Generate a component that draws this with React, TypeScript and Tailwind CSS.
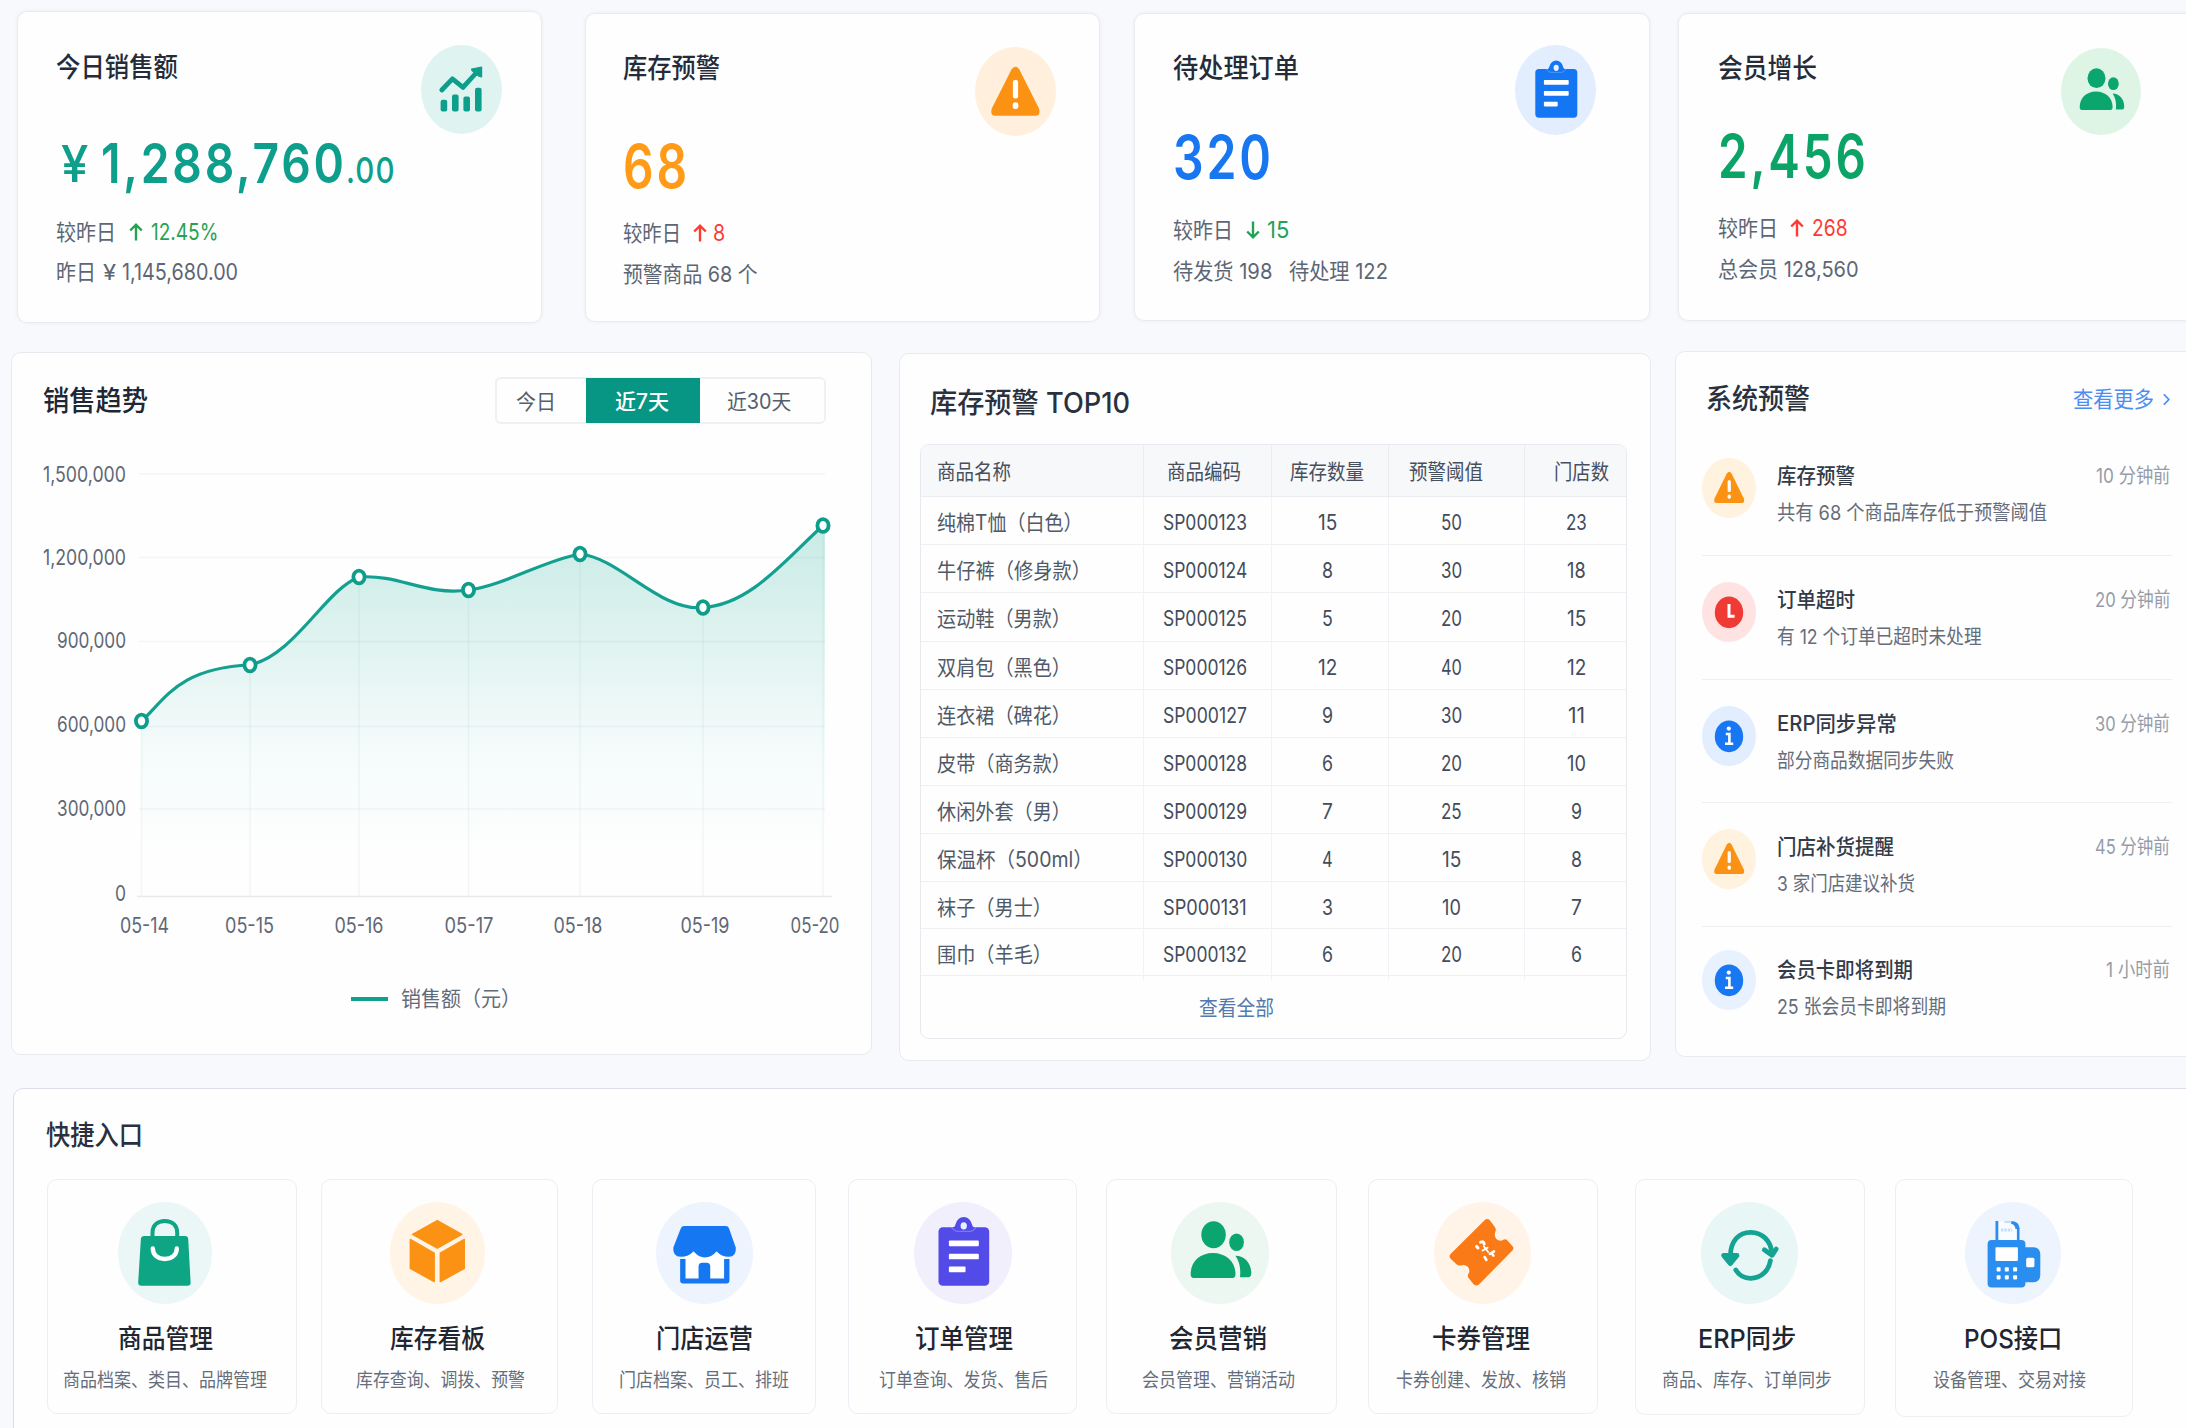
import { useLayoutEffect, useRef, useState, type ReactNode } from "react";

/* Single line of text condensed or widened to an exact width. */
function Fit({ w, className = "", children }: { w: number; className?: string; children: ReactNode }) {
  const ref = useRef<HTMLSpanElement>(null);
  const [scale, setScale] = useState(1);
  useLayoutEffect(() => {
    if (ref.current) setScale(w / ref.current.offsetWidth);
  }, [w]);
  return (
    <span className={`block shrink-0 whitespace-nowrap ${className}`} style={{ width: w }}>
      <span ref={ref} className="inline-block origin-left" style={{ transform: `scaleX(${scale})` }}>
        {children}
      </span>
    </span>
  );
}

/* ---------- icon drawings ---------- */

function TrendArt() {
  return (
    <g fill="#0d9f8c">
      <path d="M20.8 45 31.4 33.8 42 42.4 56 27" fill="none" stroke="#0d9f8c" strokeWidth="4.8" strokeLinecap="round" strokeLinejoin="round" />
      <path d="M50.6 24 60.6 22.2V32L57.5 31 51 25.5Z" stroke="#0d9f8c" strokeWidth="1.2" strokeLinejoin="round" />
      <rect x="19.6" y="54.8" width="6.6" height="11.6" rx="2" />
      <rect x="31" y="49.6" width="6.6" height="16.8" rx="2" />
      <rect x="42.4" y="51.5" width="6.6" height="14.9" rx="2" />
      <rect x="54" y="42.8" width="6.6" height="23.6" rx="2" />
    </g>
  );
}

function WarnArt() {
  return (
    <>
      <path d="M36.6 22.3Q40.4 17 44.2 22.3L64 61.5Q66 68.6 60.5 68.8H20.3Q14.8 68.6 16.8 61.5Z" fill="#fb9213" />
      <rect x="37.9" y="33" width="5.2" height="18.5" rx="2.2" fill="#fff" />
      <ellipse cx="40.5" cy="58.7" rx="2.9" ry="3.4" fill="#fff" />
    </>
  );
}

function ClipArt({ color }: { color: string }) {
  return (
    <>
      <rect x="20.3" y="24" width="42" height="48.7" rx="3.6" fill={color} />
      <path d="M30.5 24.5Q34 24.5 34.4 21.5Q36 15.6 41.2 15.4Q46.4 15.6 48 21.5Q48.4 24.5 52 24.5V27H30.5Z" fill={color} />
      <path d="M31 23.9Q33.5 27.4 36 27.4H46.5Q49 27.4 51.4 23.9" fill="none" stroke="#fff" strokeOpacity="0.25" strokeWidth="0.9" />
      <ellipse cx="41.2" cy="22.8" rx="2.6" ry="3.1" fill="#e8f1ff" />
      <rect x="28.9" y="35" width="24.8" height="4.7" rx="0.8" fill="#fff" />
      <rect x="28.9" y="46" width="24.8" height="4.7" rx="0.8" fill="#fff" />
      <rect x="28.9" y="56.7" width="13.8" height="4.7" rx="0.8" fill="#fff" />
    </>
  );
}

function PeopleArt() {
  return (
    <g fill="#0ba570">
      <ellipse cx="35.5" cy="30.2" rx="9" ry="9.9" />
      <path d="M18.7 59C18.7 50 25.5 43.6 35 43.6S51.6 50 51.6 59Q51.6 62 49.4 62H20.9Q18.7 62 18.7 59Z" />
      <ellipse cx="52.4" cy="35.7" rx="5.4" ry="6.4" />
      <path d="M51.6 45.6C58.5 45.6 63.2 51.5 63.2 58.2Q63.2 61.4 61.4 61.4H54.9C55.6 55 54.6 50 51.6 45.6Z" />
    </g>
  );
}

function BagArt() {
  return (
    <>
      <path d="M34.5 37V31C34.5 23 39.6 19 46.8 19S59.2 23 59.2 31V37" fill="none" stroke="#0da584" strokeWidth="4" />
      <path d="M26.4 34H67Q70 34 70.2 37L72.6 80Q72.8 83.7 69.4 83.7H23.4Q20 83.7 20.2 80L22.9 37Q23.1 34 26.4 34Z" fill="#0da584" />
      <path d="M34.8 46.5C34.8 53 40 57 46.8 57S58.8 53 58.8 46.5" fill="none" stroke="#fff" strokeWidth="4.4" strokeLinecap="round" />
    </>
  );
}

function CubeArt() {
  return (
    <g fill="#fb9213" stroke="#fb9213" strokeWidth="1.4" strokeLinejoin="round">
      <path d="M47.3 18.7 71.8 32.3 47.3 46.2 22.6 32.3Z" />
      <path d="M20.3 37.4 44.2 51V79.6L20.3 66.4Z" />
      <path d="M50.3 51 74.3 37.4V66.4L50.3 79.6Z" />
    </g>
  );
}

function ShopArt() {
  return (
    <>
      <path d="M29 51H70V78H29Z" fill="#fff" />
      <path d="M28.5 24H70.5Q73 24 73.8 26.4L80.6 45.5Q81.5 54.6 73.6 54.8Q66 54.8 61.2 49.2Q56 55.4 49.5 55.4T37.9 49.2Q33 54.8 25 54.8Q16.6 54.6 17.5 45.5L25 26.4Q26 24 28.5 24Z" fill="#1677f2" />
      <path d="M24.4 56.9H29.8V76.4H43V64.5Q43 60.7 46.6 60.7H51.2Q54.8 60.7 54.8 64.5V76.4H68.8V56.9H74.2V78.6Q74.2 81.5 71.3 81.5H27.3Q24.4 81.5 24.4 78.6Z" fill="#1677f2" />
    </>
  );
}

function TicketArt() {
  return (
    <>
      <path
        d="M50.6 18.2Q53.4 15.7 56 18.4L61 25.2Q62.3 27.4 61.4 29.6Q59.8 34 62.4 37Q65.6 39.8 69.4 37.8Q71.6 36.6 73.4 38.6L78.6 44.2Q80.2 46.4 78.4 48.6L45.2 82.2Q42.6 84.6 39.8 82.4L34.8 76.2Q33 74 34.6 71.6Q36.6 67.8 33.6 64.6Q30.6 62 27 63.4Q24.4 64.2 22.2 62L16.4 56.4Q14.6 54.2 16.6 52Z"
        fill="#f97a16"
      />
      <g fill="none" stroke="#fff" strokeWidth="3" strokeLinecap="round">
        <path d="M42.6 44.4 44 46M46.6 40.2Q49.6 38.6 50.2 42" />
        <path d="M49.8 44.2 54.4 50.2M48.4 48.6 53.6 45.6" strokeWidth="1.8" />
        <path d="M50.6 55 52.4 58M56 52 60 49.4M57.8 51 59.4 53.6" strokeWidth="2.6" />
      </g>
    </>
  );
}

function SyncArt() {
  return (
    <g fill="none" stroke="#14a393" strokeWidth="4.8" strokeLinecap="round" strokeLinejoin="round">
      <path d="M29.4 54C29.4 39 38 30.3 49.6 30.3S70.4 39 70.9 52" />
      <path d="M22.6 53.4H36L29.4 61.6Z" fill="#14a393" />
      <path d="M63.3 47.8 71 53.3 75.2 47" />
      <path d="M34.8 68C38 73.2 43.2 76.3 49.6 76.3C60 76.3 67.6 69 69.4 58.6" />
    </g>
  );
}

function PosArt() {
  return (
    <>
      <path d="M31.8 40V19.5H46L53.5 27V40Z" fill="#f8fbff" />
      <path d="M31.9 40V19" stroke="#2a8bf0" strokeWidth="2.8" />
      <path d="M53.2 40V26" stroke="#2a8bf0" strokeWidth="2.6" />
      <path d="M46 19.2H48.5Q54.5 20.5 54.5 27L50.5 27Q50 22.5 46 21.8Z" fill="#2a8bf0" />
      <path d="M39.5 20H46.5" stroke="#b5d4fb" strokeWidth="1.6" />
      <path d="M36 28H47" stroke="#c2dcfc" strokeWidth="2.8" strokeDasharray="2.4 1" />
      <rect x="22.6" y="38" width="37.8" height="47.4" rx="4" fill="#2a8ef0" />
      <path d="M57 45.3H68.5Q75.3 45.5 75.3 53V72.5Q75.3 80 68.5 80.3H57Z" fill="#2a8ef0" />
      <rect x="61.2" y="55.7" width="8.2" height="9.6" rx="1.6" fill="#fff" />
      <rect x="30.5" y="45.3" width="22.4" height="13.6" rx="0.8" fill="#fff" />
      <g fill="#fff">
        <rect x="31.6" y="65.3" width="4" height="4.2" rx="0.8" />
        <rect x="39.8" y="65.3" width="4" height="4.2" rx="0.8" />
        <rect x="48.1" y="65.3" width="4" height="4.2" rx="0.8" />
        <rect x="31.6" y="73.2" width="4" height="4.2" rx="0.8" />
        <rect x="39.8" y="73.2" width="4" height="4.2" rx="0.8" />
        <rect x="48.1" y="73.2" width="4" height="4.2" rx="0.8" />
      </g>
    </>
  );
}

function Arrow({ down = false, color }: { down?: boolean; color: string }) {
  return (
    <svg viewBox="0 0 14 20" className="h-5 w-3.5 shrink-0" fill="none" stroke={color} strokeWidth="2.4">
      {down ? <path d="M7 1.5V17M1.2 11.5 7 17.3 12.8 11.5" /> : <path d="M7 18.5V3M1.2 8.5 7 2.7 12.8 8.5" />}
    </svg>
  );
}

/* ---------- stat cards ---------- */

type StatProps = { card: string; badge: string; art: ReactNode; title: string; titleW: number; children: ReactNode };

function StatCard({ card, badge, art, title, titleW, children }: StatProps) {
  return (
    <section className={`flex shrink-0 justify-between rounded-[10px] border border-[#e9ebf1] bg-[#fefefe] shadow-[0_0_4px_rgba(30,41,80,0.05)] ${card}`}>
      <div>
        <h2 className="h-10 pt-px text-[27px] leading-10 font-medium text-[#252c39]">
          <Fit w={titleW}>{title}</Fit>
        </h2>
        {children}
      </div>
      <div className={`shrink-0 rounded-[50%] ${badge}`}>
        <svg viewBox="0 0 81 89" className="h-[89px] w-[81px]">{art}</svg>
      </div>
    </section>
  );
}

function Stats() {
  return (
    <div className="flex h-[351px] shrink-0 items-start pl-[17px]">
      <StatCard card="mt-[11px] h-[312px] w-[525px] pt-[35px] pr-[39px] pl-[38px]" badge="-mt-[2px] h-[89px] w-[81px] bg-[#dff4f0]" art={<TrendArt />} title="今日销售额" titleW={122}>
        <div className="mt-[46px] flex h-[60px] items-center pl-[5px] leading-[60px] text-[#0d9f8b]">
          <Fit w={27} className="pt-[2px] text-[51px] font-medium">¥</Fit>
          <Fit w={246} className="ml-[13px] text-[55px] font-semibold tracking-[0.06em]">1,288,760</Fit>
          <Fit w={50} className="-ml-[1px] pt-[13px] text-[36px] font-medium tracking-[0.04em]">.00</Fit>
        </div>
        <div className="mt-[24px] flex h-[30px] items-center text-[22px] leading-[30px] text-[#5d6674]">
          <Fit w={60}>较昨日</Fit>
          <span className="ml-[13px] flex items-center text-[#27a252]">
            <Arrow color="#27a252" />
            <Fit w={67} className="ml-[8px] text-[23px]">12.45%</Fit>
          </span>
        </div>
        <div className="mt-[10px] flex h-[30px] items-center text-[22px] leading-[30px] text-[#5d6674]">
          <Fit w={40}>昨日</Fit>
          <Fit w={13} className="ml-[7px]">¥</Fit>
          <Fit w={116} className="ml-[6px] text-[23px]">1,145,680.00</Fit>
        </div>
      </StatCard>

      <StatCard card="mt-[13px] ml-[43px] h-[309px] w-[515px] pt-[34px] pr-[43px] pl-[37px]" badge="-mt-[1px] h-[89px] w-[81px] bg-[#ffefdc]" art={<WarnArt />} title="库存预警" titleW={97}>
        <div className="mt-[48px] h-[60px] text-[60px] leading-[60px] font-semibold tracking-[0.06em] text-[#ff9b16]">
          <Fit w={67}>68</Fit>
        </div>
        <div className="mt-[22px] flex h-[30px] items-center text-[22px] leading-[30px] text-[#5d6674]">
          <Fit w={58}>较昨日</Fit>
          <span className="ml-[12px] flex items-center text-[#fb3b34]">
            <Arrow color="#fb3b34" />
            <Fit w={12} className="ml-[6px] text-[23px]">8</Fit>
          </span>
        </div>
        <div className="mt-[11px] h-[30px] text-[22px] leading-[30px] text-[#5d6674]">
          <Fit w={135}>预警商品 68 个</Fit>
        </div>
      </StatCard>

      <StatCard card="mt-[13px] ml-[34px] h-[308px] w-[516px] pt-[34px] pr-[53px] pl-[38px]" badge="-mt-[3px] h-[90px] w-[81px] bg-[#e2eefe]" art={<ClipArt color="#1576f3" />} title="待处理订单" titleW={126}>
        <div className="mt-[39px] h-[60px] text-[60px] leading-[60px] font-semibold tracking-[0.06em] text-[#1876f1]">
          <Fit w={101}>320</Fit>
        </div>
        <div className="mt-[28px] flex h-[30px] items-center text-[22px] leading-[30px] text-[#5d6674]">
          <Fit w={60}>较昨日</Fit>
          <span className="ml-[13px] flex items-center text-[#1fa455]">
            <Arrow down color="#1fa455" />
            <Fit w={22} className="ml-[7px] text-[23px]">15</Fit>
          </span>
        </div>
        <div className="mt-[11px] flex h-[30px] items-center text-[22px] leading-[30px] text-[#5d6674]">
          <Fit w={99}>待发货 198</Fit>
          <Fit w={99} className="ml-[17px]">待处理 122</Fit>
        </div>
      </StatCard>

      <StatCard card="mt-[13px] ml-[28px] h-[308px] w-[540px] pt-[34px] pr-[76px] pl-[39px]" badge="h-[87px] w-[80px] bg-[#def5e6]" art={<PeopleArt />} title="会员增长" titleW={99}>
        <div className="mt-[38px] h-[60px] text-[60px] leading-[60px] font-semibold tracking-[0.06em] text-[#0ca366]">
          <Fit w={151}>2,456</Fit>
        </div>
        <div className="mt-[27px] flex h-[30px] items-center text-[22px] leading-[30px] text-[#5d6674]">
          <Fit w={60}>较昨日</Fit>
          <span className="ml-[12px] flex items-center text-[#fb3b34]">
            <Arrow color="#fb3b34" />
            <Fit w={36} className="ml-[8px] text-[23px]">268</Fit>
          </span>
        </div>
        <div className="mt-[11px] h-[30px] text-[22px] leading-[30px] text-[#5d6674]">
          <Fit w={141}>总会员 128,560</Fit>
        </div>
      </StatCard>
    </div>
  );
}

/* ---------- sales trend ---------- */

const yTicks = [
  { t: "1,500,000", y: 474, ly: 473.5, w: 83 },
  { t: "1,200,000", y: 557.5, ly: 557, w: 83 },
  { t: "900,000", y: 641.5, ly: 640, w: 69 },
  { t: "600,000", y: 726.5, ly: 723.5, w: 69 },
  { t: "300,000", y: 809, ly: 807.5, w: 69 },
  { t: "0", y: 896.5, ly: 893, w: 11 },
];
const points = [
  { t: "05-14", x: 141.5, y: 721, lx: 144.5 },
  { t: "05-15", x: 250, y: 665, lx: 249.5 },
  { t: "05-16", x: 359, y: 577, lx: 359 },
  { t: "05-17", x: 468.5, y: 587 + 3, lx: 469 },
  { t: "05-18", x: 580, y: 554, lx: 578 },
  { t: "05-19", x: 703, y: 607.5, lx: 705 },
  { t: "05-20", x: 823, y: 525.5, lx: 815 },
];
const curve =
  "M141.5 721C165 700 178 668 250 665C295 655 325 590 359 577C400 574 425 596 468.5 590C505 585 545 560 580 554C620 558 660 612 703 607.5C750 605 785 560 823 525.5";

function TrendCard() {
  return (
    <section className="mt-px flex h-[703px] w-[861px] shrink-0 flex-col rounded-[10px] border border-[#e8eaf0] bg-[#fefefe]">
      <div className="mt-[24px] flex h-[47px] items-center justify-between pr-[45px] pl-[31px]">
        <h2 className="pt-[1px] text-[28px] font-medium text-[#202734]">
          <Fit w={105}>销售趋势</Fit>
        </h2>
        <div className="flex h-[47px] w-[331px] rounded-[6px] border-2 border-[#eef0f4] text-[21px] leading-[43px] text-[#555e6d]">
          <div className="w-[89px] pt-px pl-[19px]"><Fit w={40}>今日</Fit></div>
          <div className="-my-px w-[114px] bg-[#069683] pt-[2px] pl-[29px] font-medium text-white"><Fit w={54}>近7天</Fit></div>
          <div className="pt-px pl-[27px]"><Fit w={64}>近30天</Fit></div>
        </div>
      </div>
      <svg viewBox="12 440 860 510" className="mt-[16px] h-[510px] w-[860px] shrink-0" fontSize="22" fill="#5f6876">
        <defs>
          <linearGradient id="area" gradientUnits="userSpaceOnUse" x1="0" y1="525" x2="0" y2="850">
            <stop offset="0" stopColor="#c9ebe6" />
            <stop offset="0.35" stopColor="#dff3f0" />
            <stop offset="0.7" stopColor="#f5fbfb" />
            <stop offset="1" stopColor="#fefefe" />
          </linearGradient>
        </defs>
        <path d={`${curve}L825 526V896H141.5Z`} fill="url(#area)" />
        {yTicks.map((k) => (
          <g key={k.t}>
            <path d={k.t === "0" ? `M137 ${k.y}H832` : `M139 ${k.y}H825`} stroke="#5c7080" strokeOpacity={k.t === "0" ? 0.14 : 0.07} strokeWidth="1.6" />
            <text x={126 - k.w} y={k.ly + 8} textLength={k.w} lengthAdjust="spacingAndGlyphs">{k.t}</text>
          </g>
        ))}
        {points.map((p) => (
          <g key={p.t}>
            <path d={`M${p.x} ${p.y}V896`} stroke="#3c8a84" strokeOpacity="0.07" strokeWidth="1.4" />
            <text x={p.lx - 24.5} y="932.5" fontSize="21" textLength="49" lengthAdjust="spacingAndGlyphs">{p.t}</text>
          </g>
        ))}
        <path d={curve} fill="none" stroke="#14a090" strokeWidth="3.2" />
        {points.map((p) => (
          <ellipse key={p.t} cx={p.x} cy={p.y} rx="5.6" ry="6.4" fill="#fff" stroke="#0e9c8b" strokeWidth="3.8" />
        ))}
      </svg>
      <div className="mt-[34px] flex h-[30px] items-center pl-[339px] text-[21px] leading-[30px] text-[#616a78]">
        <span className="h-[4px] w-[37px] bg-[#10a08e]" />
        <Fit w={120} className="ml-[13px]">销售额（元）</Fit>
      </div>
    </section>
  );
}

/* ---------- inventory table ---------- */

const items: [string, number, string, string, string, string][] = [
  ["纯棉T恤（白色）", 146, "SP000123", "15", "50", "23"],
  ["牛仔裤（修身款）", 154, "SP000124", "8", "30", "18"],
  ["运动鞋（男款）", 134, "SP000125", "5", "20", "15"],
  ["双肩包（黑色）", 134, "SP000126", "12", "40", "12"],
  ["连衣裙（碑花）", 134, "SP000127", "9", "30", "11"],
  ["皮带（商务款）", 134, "SP000128", "6", "20", "10"],
  ["休闲外套（男）", 134, "SP000129", "7", "25", "9"],
  ["保温杯（500ml）", 156, "SP000130", "4", "15", "8"],
  ["袜子（男士）", 115, "SP000131", "3", "10", "7"],
  ["围巾（羊毛）", 115, "SP000132", "6", "20", "6"],
];
const numW = (s: string) => (s === "11" ? 17 : s.length === 1 ? 11 : s[0] === "1" ? 19 : 21);

function InventoryCard() {
  return (
    <section className="mt-[2px] ml-[27px] flex h-[708px] w-[752px] shrink-0 flex-col rounded-[10px] border border-[#e8eaf0] bg-[#fefefe] pl-[20px]">
      <h2 className="mt-[28px] ml-[10px] h-10 text-[28px] leading-[42px] font-medium text-[#2a313e]">
        <Fit w={200}>库存预警 TOP10</Fit>
      </h2>
      <div className="mt-[22px] h-[595px] w-[707px] overflow-hidden rounded-[9px] border border-[#e7e9ef]">
        <div className="grid h-[52px] grid-cols-[223px_128px_117px_136px_1fr] divide-x divide-[#e9ecf1] border-b border-[#e9ecf1] bg-[#f7f8fa] text-[21px] leading-[54px] text-[#464f5e]">
          <div className="pl-[16px]"><Fit w={74}>商品名称</Fit></div>
          <div className="pl-[23px]"><Fit w={74}>商品编码</Fit></div>
          <div className="pl-[18px]"><Fit w={74}>库存数量</Fit></div>
          <div className="pl-[20px]"><Fit w={74}>预警阈值</Fit></div>
          <div className="pl-[29px]"><Fit w={55}>门店数</Fit></div>
        </div>
        {items.map(([name, w, code, qty, limit, stores], i) => (
          <div
            key={code}
            className={`grid grid-cols-[223px_128px_117px_136px_1fr] divide-x divide-[#f0f2f5] border-b border-[#eef0f4] text-[21px] leading-[51px] text-[#505967] ${i < 7 ? "h-[48.2px]" : "h-[47.3px]"}`}
          >
            <div className="pl-[16px]"><Fit w={w}>{name}</Fit></div>
            <div className="pl-[19px] text-[#434c5b]"><Fit w={84}>{code}</Fit></div>
            <div className="flex justify-center pr-[6px] text-[#434c5b]"><Fit w={numW(qty)}>{qty}</Fit></div>
            <div className="flex justify-center pr-[11px] text-[#434c5b]"><Fit w={numW(limit)}>{limit}</Fit></div>
            <div className="flex justify-center pl-[2px] text-[#434c5b]"><Fit w={numW(stores)}>{stores}</Fit></div>
          </div>
        ))}
        <div className="h-[62px] pl-[278px] text-[21px] leading-[63px] text-[#527aad]">
          <Fit w={75}>查看全部</Fit>
        </div>
      </div>
    </section>
  );
}

/* ---------- system alerts ---------- */

function SmallWarn() {
  return <g transform="translate(2.1 1.25) scale(0.621 0.637)"><WarnArt /></g>;
}
function SmallClock() {
  return (
    <>
      <ellipse cx="27" cy="30.4" rx="14.2" ry="15.8" fill="#f03a34" />
      <path d="M27 22V34.3H32.6" fill="none" stroke="#fff" strokeWidth="3" />
    </>
  );
}
function SmallInfo() {
  return (
    <>
      <ellipse cx="27" cy="30.4" rx="14.2" ry="15.8" fill="#1878f4" />
      <ellipse cx="26.8" cy="22.6" rx="2.1" ry="2.1" fill="#fff" />
      <path d="M23.8 28H27.4V37M23 37.8H31.2" fill="none" stroke="#fff" strokeWidth="2.6" />
    </>
  );
}

const alerts = [
  { row: "h-[124px] pt-[26px]", art: <SmallWarn />, bg: "bg-[#fff2df]", t: "库存预警", tw: 78, d: "共有 68 个商品库存低于预警阈值", dw: 270, time: "10 分钟前", mw: 74 },
  { row: "h-[124px] pt-[26px]", art: <SmallClock />, bg: "bg-[#ffe3e2]", t: "订单超时", tw: 78, d: "有 12 个订单已超时未处理", dw: 205, time: "20 分钟前", mw: 75 },
  { row: "h-[123px] pt-[26px]", art: <SmallInfo />, bg: "bg-[#e2eefe]", t: "ERP同步异常", tw: 120, d: "部分商品数据同步失败", dw: 177, time: "30 分钟前", mw: 75 },
  { row: "h-[124px] pt-[26px]", art: <SmallWarn />, bg: "bg-[#fff2df]", t: "门店补货提醒", tw: 117, d: "3 家门店建议补货", dw: 138, time: "45 分钟前", mw: 75 },
  { row: "h-[124px] pt-[25px]", art: <SmallInfo />, bg: "-mt-[2px] bg-[#e8f2fe]", t: "会员卡即将到期", tw: 136, d: "25 张会员卡即将到期", dw: 169, time: "1 小时前", mw: 64 },
];

function AlertCard() {
  return (
    <section className="ml-[24px] flex h-[706px] w-[540px] shrink-0 flex-col rounded-[10px] border border-[#e8eaf0] bg-[#fefefe] pl-[26px]">
      <div className="mt-[27px] flex h-10 w-[468px] items-center justify-between pl-[4px] leading-[41px]">
        <h2 className="text-[28px] font-medium text-[#2a313e]"><Fit w={104}>系统预警</Fit></h2>
        <a className="flex items-center gap-[9px] text-[22px] text-[#4b8df3]">
          <Fit w={81} className="pt-px">查看更多</Fit>
          <svg viewBox="0 0 8 14" className="mt-px h-[13px] w-[7px]" fill="none" stroke="#4b8df3" strokeWidth="2"><path d="M1 1 6.6 7 1 13" /></svg>
        </a>
      </div>
      <div className="mt-[13px] w-[470px] divide-y divide-[#edeff3]">
        {alerts.map((a) => (
          <div key={a.t} className={`flex ${a.row}`}>
            <div className={`h-[60px] w-[54px] shrink-0 rounded-[50%] ${a.bg}`}>
              <svg viewBox="0 0 54 60" className="h-[60px] w-[54px]">{a.art}</svg>
            </div>
            <div className="ml-[21px] grow">
              <div className="flex h-[36px] justify-between text-[21px] leading-[36px] font-medium text-[#333b49]">
                <Fit w={a.tw}>{a.t}</Fit>
                <Fit w={a.mw} className="mr-[2px] text-[20px] font-normal text-[#959ca8]">{a.time}</Fit>
              </div>
              <div className="text-[20px] leading-[38px] text-[#656d7b]"><Fit w={a.dw}>{a.d}</Fit></div>
            </div>
          </div>
        ))}
      </div>
    </section>
  );
}

/* ---------- quick entries ---------- */

const entries = [
  { card: "w-[250px] h-[235px] pr-[14px]", badge: "w-[94px] bg-[#eaf7f6]", vb: "0 0 94 102", art: <BagArt />, t: "商品管理", tw: 95, d: "商品档案、类目、品牌管理", dw: 204 },
  { card: "ml-[24px] w-[237px] h-[235px] pr-[4px]", badge: "w-[95px] bg-[#fff4e6]", vb: "0 0 95 102", art: <CubeArt />, t: "库存看板", tw: 95, d: "库存查询、调拨、预警", dw: 169, dm: "pl-[6px]" },
  { card: "ml-[34px] w-[224px] h-[235px]", badge: "w-[97px] bg-[#edf4fe]", vb: "0 0 98 102", art: <ShopArt />, t: "门店运营", tw: 97, d: "门店档案、员工、排班", dw: 170 },
  { card: "ml-[32px] w-[229px] h-[235px]", badge: "w-[98px] bg-[#f2effd]", vb: "0 0 98 102", art: <g transform="translate(0 -3.5) scale(1.207 1.2)"><ClipArt color="#524be8" /></g>, t: "订单管理", tw: 98, tm: "pl-[2px]", d: "订单查询、发货、售后", dw: 169, dm: "pl-[2px]" },
  { card: "ml-[29px] w-[231px] h-[235px] pr-[4px]", badge: "w-[98px] bg-[#edf7f1]", vb: "0 0 98 102", art: <g transform="translate(-5.8 -8.3) scale(1.362 1.36)"><PeopleArt /></g>, t: "会员营销", tw: 98, tm: "pr-[3px]", d: "会员管理、营销活动", dw: 153, dm: "pr-[3px]" },
  { card: "ml-[31px] w-[230px] h-[235px] pr-[2px]", badge: "w-[97px] bg-[#fff4e7]", vb: "0 0 97 102", art: <TicketArt />, t: "卡券管理", tw: 98, tm: "pr-[3px]", d: "卡券创建、发放、核销", dw: 170, dm: "pr-[3px]" },
  { card: "ml-[37px] w-[230px] h-[236px] pr-[2px]", badge: "w-[97px] bg-[#e8f7f5]", vb: "0 0 97 102", art: <SyncArt />, t: "ERP同步", tw: 98, tm: "pr-[5px]", d: "商品、库存、订单同步", dw: 170, dm: "pr-[5px]" },
  { card: "ml-[30px] w-[238px] h-[238px] pr-[2px]", badge: "w-[96px] bg-[#edf4fe]", vb: "0 0 96 102", art: <PosArt />, t: "POS接口", tw: 98, d: "设备管理、交易对接", dw: 153, dm: "pr-[8px]" },
];

function QuickEntries() {
  return (
    <section className="ml-[13px] h-[380px] w-[2260px] shrink-0 rounded-[10px] border border-[#dcdfe9] bg-[#fefefe] pl-[33px]">
      <h2 className="mt-[27px] h-10 text-[27px] leading-10 font-medium text-[#2a313e]"><Fit w={97} className="-ml-px">快捷入口</Fit></h2>
      <div className="mt-[23px] flex items-start">
        {entries.map((e) => (
          <div key={e.t} className={`flex shrink-0 flex-col items-center rounded-[10px] border-[1.5px] border-[#eceef4] pt-[22px] ${e.card}`}>
            <div className={`h-[102px] shrink-0 rounded-[50%] ${e.badge}`}>
              <svg viewBox={e.vb} preserveAspectRatio="none" className="h-[102px] w-full">{e.art}</svg>
            </div>
            <h3 className={`mt-[15px] h-10 text-[26px] leading-10 font-medium text-[#1f2632] ${e.tm ?? ""}`}><Fit w={e.tw}>{e.t}</Fit></h3>
            <p className={`mt-[7px] h-[30px] text-[19px] leading-[30px] text-[#666e7c] ${e.dm ?? ""}`}><Fit w={e.dw}>{e.d}</Fit></p>
          </div>
        ))}
      </div>
    </section>
  );
}

export default function App() {
  return (
    <main className="flex h-[1428px] w-full flex-col overflow-hidden bg-[#f8f9fc] font-['Inter','Noto_Sans_CJK_SC',sans-serif]">
      <Stats />
      <div className="flex h-[737px] shrink-0 items-start pl-[11px]">
        <TrendCard />
        <InventoryCard />
        <AlertCard />
      </div>
      <QuickEntries />
    </main>
  );
}
